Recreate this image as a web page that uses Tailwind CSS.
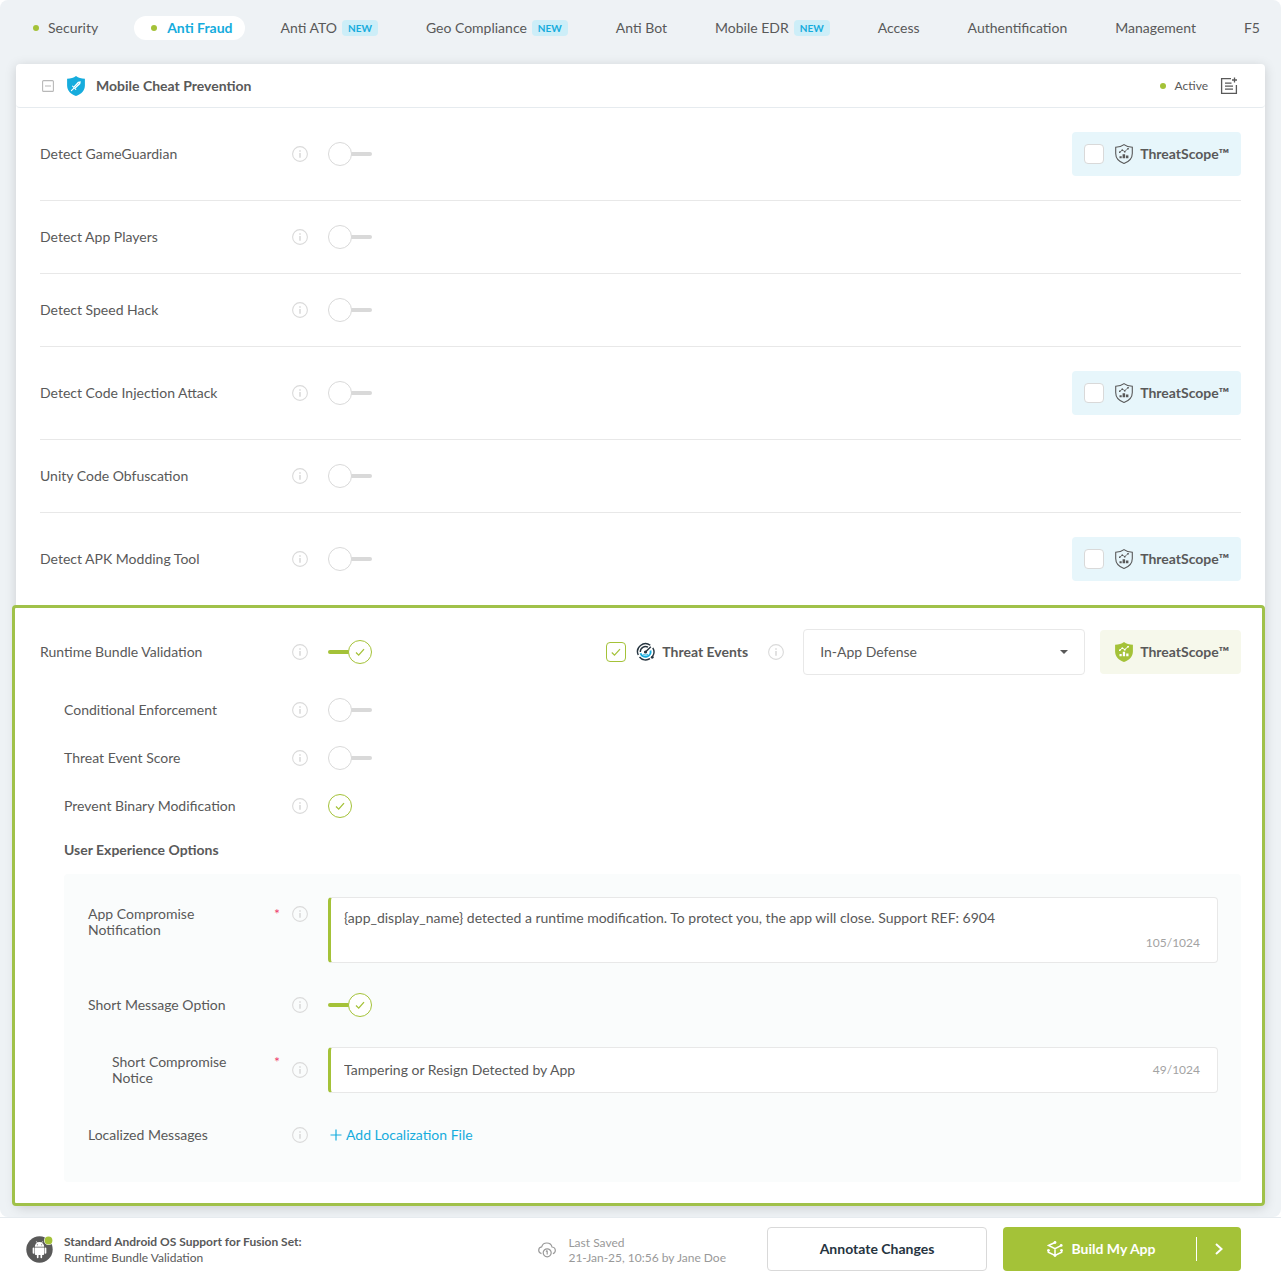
<!DOCTYPE html>
<html lang="en">
  <head>
    <meta charset="UTF-8" />
    <meta name="viewport" content="width=device-width, initial-scale=1.0" />
    <title>Anti Fraud - Mobile Cheat Prevention</title>
    <script src="https://cdn.jsdelivr.net/npm/@tailwindcss/browser@4"></script>
  </head>
  <body
    class="flex min-h-screen flex-col bg-white font-['Lato',sans-serif] text-sm leading-4 text-[#595959]"
  >
    <!-- shared icons -->
    <svg class="hidden">
      <symbol id="info" viewBox="0 0 16 16">
        <circle cx="8" cy="8" r="7.4" fill="none" stroke="#dadada" stroke-width="1.1" />
        <path d="M7.2 4.2h1.6v1.5H7.2zM7.2 7h1.6v4.8H7.2z" fill="#dadada" />
      </symbol>
      <symbol id="toggle-off" viewBox="0 0 44 24">
        <rect x="20" y="10" width="24" height="4" rx="2" fill="#d9d9d9" />
        <circle cx="12" cy="12" r="11.5" fill="#fff" stroke="#d9d9d9" />
      </symbol>
      <symbol id="toggle-on" viewBox="0 0 44 24">
        <rect x="0" y="10" width="24" height="4" rx="2" fill="#a4c238" />
        <circle cx="32" cy="12" r="11.5" fill="#fff" stroke="#a4c238" />
        <path d="M28 12.5l2.7 2.6 5.3-6" fill="none" stroke="#a4c238" stroke-width="1.3" />
      </symbol>
      <symbol id="shield" viewBox="0 0 20 20">
        <path d="M10 .6c2.2 1.7 4.8 2.5 8.3 2.7v6.2c0 5-3.3 8.2-8.3 10-5-1.8-8.3-5-8.3-10V3.300C5.200 3.100 7.800 2.300 10 .6z" fill="none" stroke="#595959" stroke-width="1.1" />
        <path d="M5.500 8.200l2.800-2 2.500 1.300L14.300 4.500" fill="none" stroke="#595959" stroke-width=".8" />
        <path d="M5 7.500h1.500V9H5zM7.500 5.500H9V7H7.500zM10 7h1.500v1.500H10zM13.300 4h1.500v1.500h-1.500zM5.500 12.300h2.200v2H5.500zM8.600 10.300h2.500v4H8.600zM11.900 11.500h2.500v2.800h-2.500z" fill="#595959" />
      </symbol>
      <symbol id="shield-solid" viewBox="0 0 20 20">
        <path d="M10 0c2.400 1.700 5.200 2.600 8.900 2.800v6.700c0 5.200-3.500 8.600-8.900 10.500-5.400-1.900-8.900-5.300-8.900-10.500V2.800C4.800 2.600 7.600 1.700 10 0z" fill="#a4c238" />
        <path d="M5.500 8.200l2.800-2 2.500 1.300L14.300 4.500" fill="none" stroke="#fff" />
        <path d="M5 7.500h1.600V9H5zM7.500 5.500h1.600V7H7.500zM10 7h1.600v1.500H10zM13.300 4h1.600v1.500h-1.600zM5.500 12h2.200v2.200H5.500zM8.800 9.800h2.300v4.400H8.800zM12.200 11.500h2.300v2.700h-2.300z" fill="#fff" />
      </symbol>
    </svg>

    <main class="overflow-hidden rounded-lg bg-[#eef2f5] px-4 pb-[11px]">
      <!-- tabs -->
      <nav class="flex gap-6 py-4 whitespace-nowrap">
        <a href="#" class="flex h-6 items-center rounded-full px-3">
          <span class="mr-[9px] ml-[5px] size-1.5 rounded-full bg-[#a4c238]"></span>Security
        </a>
        <a href="#" class="flex h-6 items-center rounded-full bg-white px-3 font-bold text-[#16acdd]">
          <span class="mr-2.5 ml-[5px] size-1.5 rounded-full bg-[#a4c238]"></span>Anti Fraud
        </a>
        <a href="#" class="flex h-6 items-center gap-[5px] px-3">
          Anti ATO
          <span class="rounded bg-[#cdeef8] px-1.5 text-[10px] font-bold text-[#16acdd]">NEW</span>
        </a>
        <a href="#" class="flex h-6 items-center gap-[5px] px-3">
          Geo Compliance
          <span class="rounded bg-[#cdeef8] px-1.5 text-[10px] font-bold text-[#16acdd]">NEW</span>
        </a>
        <a href="#" class="flex h-6 items-center px-3">Anti Bot</a>
        <a href="#" class="flex h-6 items-center gap-[5px] px-3">
          Mobile EDR
          <span class="rounded bg-[#cdeef8] px-1.5 text-[10px] font-bold text-[#16acdd]">NEW</span>
        </a>
        <a href="#" class="flex h-6 items-center px-3">Access</a>
        <a href="#" class="flex h-6 items-center px-3">Authentification</a>
        <a href="#" class="flex h-6 items-center px-3">Management</a>
        <a href="#" class="flex h-6 items-center px-3">F5</a>
      </nav>

      <section class="mt-2 rounded bg-white shadow-[0_2px_12px_rgba(0,0,0,0.15)]">
        <!-- card header -->
        <header class="flex h-11 items-center rounded border-b border-[#e6ebef] px-6">
          <button type="button" aria-label="Collapse" class="ml-0.5">
            <svg class="size-3" viewBox="0 0 12 12" fill="none" stroke="#b8b8b8" stroke-width="1.1">
              <rect x=".6" y=".6" width="10.8" height="10.800" rx="1" />
              <path d="M3 6h6" />
            </svg>
          </button>
          <svg class="ml-3 size-5" viewBox="0 0 20 20">
            <path d="M10 0c2.400 1.700 5.200 2.600 8.900 2.800v6.700c0 5.200-3.500 8.600-8.900 10.500-5.400-1.900-8.900-5.300-8.900-10.500V2.800C4.800 2.600 7.600 1.700 10 0z" fill="#16acdd" />
            <path d="M14.800 5.200l-.5 2.900-4.800 4.300-1.800-1.800 4.300-4.800z" fill="#fff" />
            <path d="M6.600 10.200l3.200 3.200M7.700 12.300l-2.300 2.300" stroke="#fff" stroke-width="1.100" stroke-linecap="round" />
            <path d="M13 7l-4.400 4.500" stroke="#16acdd" stroke-width=".5" />
          </svg>
          <h1 class="ml-2.5 font-bold">Mobile Cheat Prevention</h1>
          <span class="ml-auto size-1.5 rounded-full bg-[#a4c238]"></span>
          <span class="ml-[9px] text-xs">Active</span>
          <button type="button" aria-label="Add note" class="mr-[3px] ml-3">
            <svg class="size-[18px]" viewBox="0 0 18 18" fill="none" stroke="#595959" stroke-width="1.300">
              <path d="M11 1.600H1.600v14.800h14.800V8" />
              <path d="M14.500.5v5M12 3h5M5 6.200h6.500M5 9.200h8M5 12.200h8" />
            </svg>
          </button>
        </header>

        <!-- protections -->
        <div class="mx-6 flex h-[93px] items-center border-b border-[#e8e8e8]">
          <label for="gameguardian" class="w-63">Detect GameGuardian</label>
          <svg class="size-4"><use href="#info" /></svg>
          <span class="ml-5 grid">
            <input id="gameguardian" type="checkbox" role="switch" class="peer col-start-1 row-start-1 h-6 w-11 appearance-none" />
            <svg class="pointer-events-none col-start-1 row-start-1 h-6 w-11 peer-checked:hidden"><use href="#toggle-off" /></svg>
            <svg class="pointer-events-none col-start-1 row-start-1 hidden h-6 w-11 peer-checked:block"><use href="#toggle-on" /></svg>
          </span>
          <label class="ml-auto flex h-11 items-center rounded bg-[#e7f6fb] px-3 font-bold">
            <input type="checkbox" class="size-5 appearance-none rounded border border-[#d9d9d9] bg-white checked:bg-[#a4c238]" />
            <svg class="mr-1.5 ml-2.5 size-5"><use href="#shield" /></svg>
            ThreatScope™
          </label>
        </div>
        <div class="mx-6 flex h-[73px] items-center border-b border-[#e8e8e8]">
          <label for="app-players" class="w-63">Detect App Players</label>
          <svg class="size-4"><use href="#info" /></svg>
          <span class="ml-5 grid">
            <input id="app-players" type="checkbox" role="switch" class="peer col-start-1 row-start-1 h-6 w-11 appearance-none" />
            <svg class="pointer-events-none col-start-1 row-start-1 h-6 w-11 peer-checked:hidden"><use href="#toggle-off" /></svg>
            <svg class="pointer-events-none col-start-1 row-start-1 hidden h-6 w-11 peer-checked:block"><use href="#toggle-on" /></svg>
          </span>
        </div>
        <div class="mx-6 flex h-[73px] items-center border-b border-[#e8e8e8]">
          <label for="speed-hack" class="w-63">Detect Speed Hack</label>
          <svg class="size-4"><use href="#info" /></svg>
          <span class="ml-5 grid">
            <input id="speed-hack" type="checkbox" role="switch" class="peer col-start-1 row-start-1 h-6 w-11 appearance-none" />
            <svg class="pointer-events-none col-start-1 row-start-1 h-6 w-11 peer-checked:hidden"><use href="#toggle-off" /></svg>
            <svg class="pointer-events-none col-start-1 row-start-1 hidden h-6 w-11 peer-checked:block"><use href="#toggle-on" /></svg>
          </span>
        </div>
        <div class="mx-6 flex h-[93px] items-center border-b border-[#e8e8e8]">
          <label for="code-injection" class="w-63">Detect Code Injection Attack</label>
          <svg class="size-4"><use href="#info" /></svg>
          <span class="ml-5 grid">
            <input id="code-injection" type="checkbox" role="switch" class="peer col-start-1 row-start-1 h-6 w-11 appearance-none" />
            <svg class="pointer-events-none col-start-1 row-start-1 h-6 w-11 peer-checked:hidden"><use href="#toggle-off" /></svg>
            <svg class="pointer-events-none col-start-1 row-start-1 hidden h-6 w-11 peer-checked:block"><use href="#toggle-on" /></svg>
          </span>
          <label class="ml-auto flex h-11 items-center rounded bg-[#e7f6fb] px-3 font-bold">
            <input type="checkbox" class="size-5 appearance-none rounded border border-[#d9d9d9] bg-white checked:bg-[#a4c238]" />
            <svg class="mr-1.5 ml-2.5 size-5"><use href="#shield" /></svg>
            ThreatScope™
          </label>
        </div>
        <div class="mx-6 flex h-[73px] items-center border-b border-[#e8e8e8]">
          <label for="unity" class="w-63">Unity Code Obfuscation</label>
          <svg class="size-4"><use href="#info" /></svg>
          <span class="ml-5 grid">
            <input id="unity" type="checkbox" role="switch" class="peer col-start-1 row-start-1 h-6 w-11 appearance-none" />
            <svg class="pointer-events-none col-start-1 row-start-1 h-6 w-11 peer-checked:hidden"><use href="#toggle-off" /></svg>
            <svg class="pointer-events-none col-start-1 row-start-1 hidden h-6 w-11 peer-checked:block"><use href="#toggle-on" /></svg>
          </span>
        </div>
        <div class="mx-6 flex h-[92px] items-center">
          <label for="apk-modding" class="w-63">Detect APK Modding Tool</label>
          <svg class="size-4"><use href="#info" /></svg>
          <span class="ml-5 grid">
            <input id="apk-modding" type="checkbox" role="switch" class="peer col-start-1 row-start-1 h-6 w-11 appearance-none" />
            <svg class="pointer-events-none col-start-1 row-start-1 h-6 w-11 peer-checked:hidden"><use href="#toggle-off" /></svg>
            <svg class="pointer-events-none col-start-1 row-start-1 hidden h-6 w-11 peer-checked:block"><use href="#toggle-on" /></svg>
          </span>
          <label class="ml-auto flex h-11 items-center rounded bg-[#e7f6fb] px-3 font-bold">
            <input type="checkbox" class="size-5 appearance-none rounded border border-[#d9d9d9] bg-white checked:bg-[#a4c238]" />
            <svg class="mr-1.5 ml-2.5 size-5"><use href="#shield" /></svg>
            ThreatScope™
          </label>
        </div>

        <!-- runtime bundle validation -->
        <div class="-ml-1 rounded border-3 border-[#a0c149] bg-white py-[21px] pr-[21px] pl-[25px]">
          <div class="mb-[11px] flex items-center">
            <label for="runtime-bundle" class="w-63">Runtime Bundle Validation</label>
            <svg class="size-4"><use href="#info" /></svg>
            <span class="ml-5 grid">
              <input id="runtime-bundle" type="checkbox" role="switch" checked class="peer col-start-1 row-start-1 h-6 w-11 appearance-none" />
              <svg class="pointer-events-none col-start-1 row-start-1 h-6 w-11 peer-checked:hidden"><use href="#toggle-off" /></svg>
              <svg class="pointer-events-none col-start-1 row-start-1 hidden h-6 w-11 peer-checked:block"><use href="#toggle-on" /></svg>
            </span>
            <label class="ml-auto flex items-center font-bold">
              <span class="grid">
                <input type="checkbox" checked class="peer col-start-1 row-start-1 size-5 appearance-none rounded border border-[#d9d9d9] bg-white checked:border-[#a4c238]" />
                <svg class="pointer-events-none col-start-1 row-start-1 hidden size-5 peer-checked:block" viewBox="0 0 20 20">
                  <path d="M5.800 10.500l2.700 2.600 5.500-6" fill="none" stroke="#a4c238" stroke-width="1.200" />
                </svg>
              </span>
              <svg class="mr-1.5 ml-2.5 size-5" viewBox="0 0 20 20" fill="none">
                <path d="M14.300 3.200A8 8 0 0 0 2.300 13M3.500 15a8 8 0 0 0 10.500 1.700M16.800 5.800a8 8 0 0 1-.3 8.700" stroke="#26343f" stroke-width="1.400" />
                <path d="M12 5.200A5.200 5.200 0 0 0 4.300 10" stroke="#26343f" stroke-width="1.400" />
                <path d="M4.500 11.300a5.200 5.200 0 0 0 10-2.800" stroke="#16acdd" stroke-width="1.900" />
                <path d="M7.400 12a2.800 2.800 0 0 0 4.400 0" stroke="#16acdd" stroke-width="1.100" />
                <path d="M9.500 10l5.300-5.300" stroke="#26343f" stroke-width="1.400" />
                <circle cx="9.500" cy="10" r="1.600" fill="#26343f" />
                <circle cx="16.200" cy="15.300" r="1.400" fill="#26343f" />
              </svg>
              Threat Events
            </label>
            <svg class="ml-5 size-4"><use href="#info" /></svg>
            <span class="ml-[19px] grid items-center">
              <select aria-label="Enforcement" class="col-start-1 row-start-1 h-[46px] w-[282px] appearance-none rounded border border-[#e8e8e8] bg-white px-4">
                <option>In-App Defense</option>
              </select>
              <svg class="pointer-events-none col-start-1 row-start-1 mr-[17px] h-1 w-2 justify-self-end" viewBox="0 0 8 4">
                <path d="M0 0h8L4 4z" fill="#595959" />
              </svg>
            </span>
            <span class="ml-[15px] flex h-11 items-center rounded bg-[#f6f8eb] pr-3 pl-3.5 font-bold">
              <svg class="mr-1.5 size-5"><use href="#shield-solid" /></svg>
              ThreatScope™
            </span>
          </div>

          <div class="flex h-12 items-center pl-6">
            <label for="conditional" class="w-57">Conditional Enforcement</label>
            <svg class="size-4"><use href="#info" /></svg>
            <span class="ml-5 grid">
              <input id="conditional" type="checkbox" role="switch" class="peer col-start-1 row-start-1 h-6 w-11 appearance-none" />
              <svg class="pointer-events-none col-start-1 row-start-1 h-6 w-11 peer-checked:hidden"><use href="#toggle-off" /></svg>
              <svg class="pointer-events-none col-start-1 row-start-1 hidden h-6 w-11 peer-checked:block"><use href="#toggle-on" /></svg>
            </span>
          </div>
          <div class="flex h-12 items-center pl-6">
            <label for="event-score" class="w-57">Threat Event Score</label>
            <svg class="size-4"><use href="#info" /></svg>
            <span class="ml-5 grid">
              <input id="event-score" type="checkbox" role="switch" class="peer col-start-1 row-start-1 h-6 w-11 appearance-none" />
              <svg class="pointer-events-none col-start-1 row-start-1 h-6 w-11 peer-checked:hidden"><use href="#toggle-off" /></svg>
              <svg class="pointer-events-none col-start-1 row-start-1 hidden h-6 w-11 peer-checked:block"><use href="#toggle-on" /></svg>
            </span>
          </div>
          <div class="flex h-12 items-center pl-6">
            <label for="binary-mod" class="w-57">Prevent Binary Modification</label>
            <svg class="size-4"><use href="#info" /></svg>
            <span class="ml-5 grid">
              <input id="binary-mod" type="checkbox" checked class="peer col-start-1 row-start-1 size-6 appearance-none rounded-full border border-[#d9d9d9] checked:border-[#a4c238]" />
              <svg class="pointer-events-none col-start-1 row-start-1 hidden size-6 peer-checked:block" viewBox="0 0 24 24">
                <path d="M8 12.500l2.700 2.600 5.300-6" fill="none" stroke="#a4c238" stroke-width="1.300" />
              </svg>
            </span>
          </div>

          <h2 class="mt-3 ml-6 font-bold">User Experience Options</h2>

          <div class="mt-4 ml-6 flex flex-col gap-[30px] rounded bg-[#fafcfc] pt-[23px] pr-[23px] pb-[35px] pl-6">
            <div class="flex items-start">
              <label for="app-notification" class="flex w-51 justify-between pt-[9px] pr-3">
                <span class="max-w-32">App Compromise Notification</span>
                <span class="text-[#ee3e6d]">*</span>
              </label>
              <svg class="mt-[9px] size-4"><use href="#info" /></svg>
              <div class="ml-5 flex-1 rounded border border-l-3 border-[#e8e8e8] border-l-[#a4c238] bg-white pt-3 pr-[17px] pb-[11px] pl-[13px]">
                <textarea id="app-notification" rows="1" class="block h-4 w-full resize-none overflow-hidden outline-none">{app_display_name} detected a runtime modification. To protect you, the app will close. Support REF: 6904</textarea>
                <p class="mt-[9px] text-right text-xs leading-4 text-[#a3a3a3]">105/1024</p>
              </div>
            </div>

            <div class="flex items-center">
              <label for="short-message" class="w-51">Short Message Option</label>
              <svg class="size-4"><use href="#info" /></svg>
              <span class="ml-5 grid">
                <input id="short-message" type="checkbox" role="switch" checked class="peer col-start-1 row-start-1 h-6 w-11 appearance-none" />
                <svg class="pointer-events-none col-start-1 row-start-1 h-6 w-11 peer-checked:hidden"><use href="#toggle-off" /></svg>
                <svg class="pointer-events-none col-start-1 row-start-1 hidden h-6 w-11 peer-checked:block"><use href="#toggle-on" /></svg>
              </span>
            </div>

            <div class="flex items-center pl-6">
              <label for="short-notice" class="flex w-45 justify-between pr-3">
                <span class="max-w-32">Short Compromise Notice</span>
                <span class="text-[#ee3e6d]">*</span>
              </label>
              <svg class="size-4"><use href="#info" /></svg>
              <div class="ml-5 flex h-[46px] flex-1 items-center rounded border border-l-3 border-[#e8e8e8] border-l-[#a4c238] bg-white pr-[17px] pl-[13px]">
                <input id="short-notice" type="text" value="Tampering or Resign Detected by App" class="flex-1 outline-none" />
                <span class="text-xs text-[#a3a3a3]">49/1024</span>
              </div>
            </div>

            <div class="flex h-6 items-center">
              <span class="w-51">Localized Messages</span>
              <svg class="size-4"><use href="#info" /></svg>
              <button type="button" class="ml-5 flex items-center gap-1 pl-0.5 text-[#16acdd]">
                <svg class="size-3" viewBox="0 0 12 12" fill="none" stroke="currentColor" stroke-width="1.200">
                  <path d="M6 .5v11M.5 6h11" />
                </svg>
                Add Localization File
              </button>
            </div>
          </div>
        </div>
      </section>
    </main>

    <!-- bottom bar -->
    <footer class="flex items-center border-t border-[#e6ebef] bg-white py-[9px] pr-10 pl-[26px]">
      <svg class="size-[27px]" viewBox="0 0 27 27">
        <circle cx="13.500" cy="13.500" r="13.200" fill="#595959" />
        <path d="M8.800 10.700a4.700 4.700 0 0 1 9.400 0z" fill="#fff" />
        <path d="M10.300 5.300l1.200 1.900M16.700 5.300l-1.200 1.900" stroke="#fff" stroke-width=".7" />
        <path d="M8.800 11.500h9.400v6.600a1 1 0 0 1-1 1H9.800a1 1 0 0 1-1-1z" fill="#fff" />
        <path d="M7.500 12.300v4.500M19.500 12.300v4.500M11.700 18v3.300M15.300 18v3.300" stroke="#fff" stroke-width="1.700" stroke-linecap="round" />
        <circle cx="11.400" cy="8.700" r=".5" fill="#595959" />
        <circle cx="15.600" cy="8.700" r=".5" fill="#595959" />
        <circle cx="22.500" cy="4.500" r="4.500" fill="#fff" />
        <circle cx="22.500" cy="4.500" r="3.900" fill="#a4c238" />
      </svg>
      <div class="ml-[11px] pt-0.5 text-xs leading-4">
        <p class="font-bold">Standard Android OS Support for Fusion Set:</p>
        <p>Runtime Bundle Validation</p>
      </div>
      <div class="ml-auto flex items-center pt-0.5 text-[#999]">
        <svg class="h-4 w-[18px]" viewBox="0 0 18 16" fill="none" stroke="currentColor" stroke-width="1.200">
          <path d="M3.500 11.600C1.700 11 .7 9.800.7 8.200c0-1.800 1.300-3.200 3-3.400C4.300 2.500 6.400 1 8.800 1c2.600 0 4.700 1.600 5.200 4 1.900.2 3.300 1.600 3.300 3.400 0 1.500-.9 2.700-2.400 3.200" />
          <circle cx="9.200" cy="10.800" r="4" />
          <path d="M9.200 8.500v4M8 9.700l1.200-1.200" />
        </svg>
        <div class="ml-3 text-xs leading-[15px]">
          <p>Last Saved</p>
          <p>21-Jan-25, 10:56 by Jane Doe</p>
        </div>
      </div>
      <button type="button" class="ml-[41px] h-11 w-[220px] rounded border border-[#d9d9d9] bg-white font-bold text-[#26343f]">
        Annotate Changes
      </button>
      <div class="ml-4 flex h-11 w-[238px] items-center rounded bg-[#a4c238] font-bold text-white">
        <button type="button" class="flex flex-1 items-center justify-center gap-2 pl-1">
          <svg class="size-4" viewBox="0 0 16 16" fill="none" stroke="currentColor" stroke-width="1.500">
            <path d="M8 1.500L1.500 4.500 8 7.600l6-3M8 7.600v6.800M1.300 9.200v2.100L8 14.500l6.700-3.200V9.200" />
            <g fill="currentColor" stroke="none">
              <circle cx="8" cy="1.500" r="1.400" />
              <circle cx="14.200" cy="4.400" r="1.400" />
              <circle cx="1.500" cy="9.300" r="1.300" />
              <circle cx="14.500" cy="9.300" r="1.300" />
              <circle cx="8" cy="14.500" r="1.400" />
            </g>
          </svg>
          Build My App
        </button>
        <button type="button" aria-label="More build options" class="flex h-6 w-[45px] items-center justify-center border-l border-white">
          <svg class="h-3 w-2" viewBox="0 0 8 12" fill="none" stroke="currentColor" stroke-width="2">
            <path d="M1 1l5.500 5L1 11" />
          </svg>
        </button>
      </div>
    </footer>
  </body>
</html>
